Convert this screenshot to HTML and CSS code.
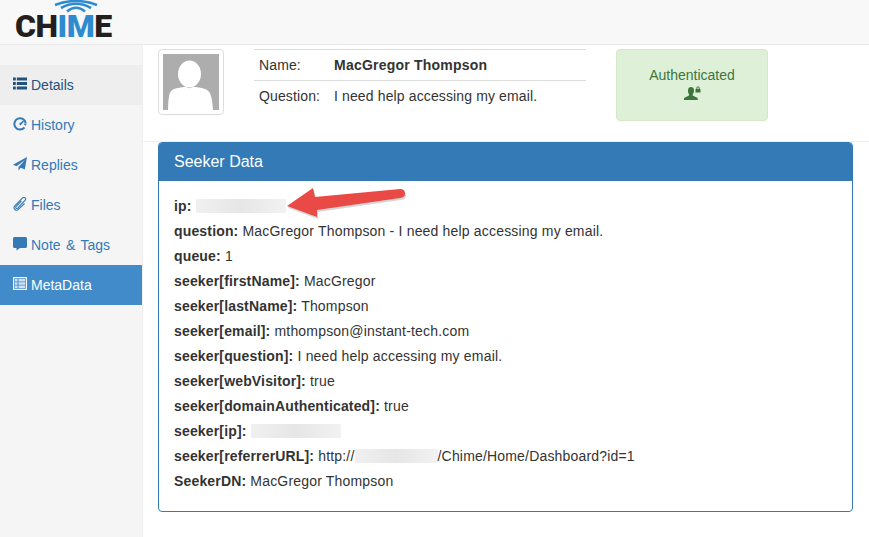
FILE: index.html
```html
<!DOCTYPE html>
<html lang="en">
<head>
<meta charset="utf-8">
<title>Chime</title>
<link rel="stylesheet" href="styles.css">
</head>
<body>
<header class="topbar">
  <div class="logo">
    <svg class="logo-arcs" width="44" height="13" viewBox="0 0 44 13" fill="none" stroke="#2e8bd0" stroke-linecap="butt">
      <path d="M1 5Q22 -3 43 5" stroke-width="2.600"/>
      <path d="M7 8Q22 -.5 37 8" stroke-width="2.600"/>
      <path d="M13 11.500Q22 4 31 11.500" stroke-width="2.600"/>
    </svg>
    <span class="logo-text">CH<span class="logo-blue">IM</span>E</span>
  </div>
</header>
<div class="layout">
  <nav class="sidebar">
    <a class="nav-item is-hover">
      <svg class="nav-icon" viewBox="0 0 14 14"><path fill="currentColor" d="M0 .5h2.800v3H0zM3.800 .5H14v3H3.800zM0 5h2.800v3H0zM3.800 5H14v3H3.800zM0 9.500h2.800v3H0zM3.800 9.500H14v3H3.800z"/></svg>Details</a>
    <a class="nav-item">
      <svg class="nav-icon" viewBox="0 0 14 14"><path fill="none" stroke="currentColor" stroke-width="2" d="M11.500 10.500A5.700 5.700 0 1 1 12.700 6"/><path fill="currentColor" d="M6 7l4-3.500 1 1L7.500 8.500zM10.500 6.500h3.500l-1.700 2.500z"/></svg>History</a>
    <a class="nav-item">
      <svg class="nav-icon" viewBox="0 0 14 14"><path fill="currentColor" d="M14 0L11.800 12.500 7.800 10.800 5.500 13.500V10L12 3 3.500 9.300 0 7.800z"/></svg>Replies</a>
    <a class="nav-item">
      <svg class="nav-icon" viewBox="0 0 14 14"><path fill="none" stroke="currentColor" stroke-width="1.100" d="M8.500 4L3 9.700c-1 1.200 .6 2.400 1.700 1.400L12 3.500C14 1 11 -.5 9.300 1.200L1.800 8.800c-2.300 2.800 1.200 6 3.800 3.400L11.500 6.500"/></svg>Files</a>
    <a class="nav-item">
      <svg class="nav-icon" viewBox="0 0 14 14"><path fill="currentColor" d="M1.500 0h11A1.500 1.500 0 0 1 14 1.500v8a1.500 1.500 0 0 1-1.500 1.500H7L3.500 13.500V11h-2A1.500 1.500 0 0 1 0 9.500v-8A1.500 1.500 0 0 1 1.500 0z"/></svg>Note &amp; Tags</a>
    <a class="nav-item is-active">
      <svg class="nav-icon" viewBox="0 0 14 14"><path fill="currentColor" fill-rule="evenodd" d="M0 0h14v13H0zM1.200 1.200v10.600h11.600V1.200z"/><path fill="currentColor" opacity=".75" d="M2 2h2.500v2.500H2zM5.500 2H12v2.500H5.500zM2 5.300h2.500v2.500H2zM5.500 5.300H12v2.500H5.500zM2 8.600h2.500V11H2zM5.500 8.600H12V11H5.500z"/></svg>MetaData</a>
  </nav>
  <main class="content">
    <section class="summary">
      <div class="avatar">
        <svg width="56" height="56" viewBox="0 0 56 56"><rect width="56" height="56" fill="#adadad"/><ellipse cx="26.500" cy="20" rx="11.500" ry="13.500" fill="#fff"/><path d="M5 56C5.500 42 6 37 11 35c5-1.500 9-2 12-2 2 1.500 5 1.500 7 0 4 0 7 .5 12 2 6 2 7 8 8 21z" fill="#fff"/></svg>
      </div>
      <div class="identity">
        <div class="identity-row"><span class="identity-label">Name:</span><strong>MacGregor Thompson</strong></div>
        <div class="identity-row"><span class="identity-label">Question:</span><span>I need help accessing my email.</span></div>
      </div>
      <div class="auth-badge">
        <span>Authenticated</span>
        <svg class="auth-icon" width="17" height="14" viewBox="0 0 17 14"><path fill="#3c763d" d="M7 1c2 0 3 1.500 3 3.500 0 1.500-.5 3-1.300 3.800V9.500l5 2.500v2H0v-2l5-2.500V8.300C4.300 7.500 4 6 4 4.500 4 2.500 5 1 7 1z"/><path fill="#3c763d" d="M11.500 3H16.500V6.500H11.500z"/><path fill="none" stroke="#3c763d" d="M12.800 3V2a1.200 1.200 0 0 1 2.400 0v1"/></svg>
      </div>
    </section>
    <section class="panel">
      <h2 class="panel-heading">Seeker Data</h2>
      <div class="panel-body">
        <p class="row"><b>ip:</b> <span class="redact redact-ip"></span></p>
        <p class="row"><b>question:</b> MacGregor Thompson - I need help accessing my email.</p>
        <p class="row"><b>queue:</b> 1</p>
        <p class="row"><b>seeker[firstName]:</b> MacGregor</p>
        <p class="row"><b>seeker[lastName]:</b> Thompson</p>
        <p class="row"><b>seeker[email]:</b> mthompson@instant-tech.com</p>
        <p class="row"><b>seeker[question]:</b> I need help accessing my email.</p>
        <p class="row"><b>seeker[webVisitor]:</b> true</p>
        <p class="row"><b>seeker[domainAuthenticated]:</b> true</p>
        <p class="row"><b>seeker[ip]:</b> <span class="redact redact-ip2"></span></p>
        <p class="row"><b>seeker[referrerURL]:</b> http://<span class="redact redact-url"></span>/Chime/Home/Dashboard?id=1</p>
        <p class="row"><b>SeekerDN:</b> MacGregor Thompson</p>
      </div>
    </section>
  </main>
</div>
<svg class="arrow" width="124" height="36" viewBox="0 0 124 36">
  <path fill="#000" opacity=".16" d="M3 21L29 3 31 12 116 4q5 0 5 4.500 0 4-5 4.500L33 25 33 32z" transform="translate(1 2)"/>
  <path fill="#ea4a45" d="M3 21L29 3 31 12 116 4q5 0 5 4.500 0 4-5 4.500L33 25 33 32z"/>
</svg>
</body>
</html>
```
FILE: styles.css
```css
* { box-sizing: border-box; }
html, body { margin: 0; height: 100%; }
body {
  position: relative;
  width: 869px;
  height: 537px;
  overflow: hidden;
  background: #fff;
  color: #333;
  font: 14px/20px "Liberation Sans", Arial, sans-serif;
}
.topbar {
  height: 45px;
  background: #f8f8f8;
  border-bottom: 1px solid #e7e7e7;
  padding-left: 15px;
}
.logo { position: relative; width: 100px; height: 44px; }
.logo-arcs { position: absolute; left: 39px; top: 0; }
.logo-text {
  position: absolute;
  left: 0;
  top: 11px;
  font: 900 32px/31px Roboto, "Liberation Sans", sans-serif;
  color: #231f20;
  letter-spacing: -.5px;
  white-space: nowrap;
}
.logo-blue { color: #2e8bd0; }
.layout { display: flex; height: 492px; }
.sidebar {
  width: 143px;
  flex: none;
  padding-top: 20px;
  background: #f5f5f5;
  border-right: 1px solid #eee;
}
.nav-item {
  display: flex;
  align-items: center;
  height: 40px;
  padding-left: 13px;
  color: #337ab7;
  word-spacing: 1.5px;
}
.nav-icon { width: 14px; height: 14px; margin-right: 4px; margin-top: -3px; flex: none; }
.nav-item.is-hover { background: #eee; color: #23527c; }
.nav-item.is-active { background: #428bca; color: #fff; }
.content { flex: 1; min-width: 0; }
.summary {
  position: relative;
  display: flex;
  align-items: flex-start;
  height: 97px;
  padding: 4px 0 0 15px;
  border-bottom: 1px solid #f0f0f0;
}
.avatar {
  width: 66px;
  height: 66px;
  padding: 4px;
  background: #fff;
  border: 1px solid #ddd;
  border-radius: 4px;
  flex: none;
}
.avatar svg { display: block; }
.identity {
  width: 332px;
  margin-left: 30px;
  border-top: 1px solid #ddd;
  letter-spacing: .13px;
}
.identity strong { letter-spacing: .22px; }
.identity-row {
  display: flex;
  height: 31px;
  padding: 5px 5px 0;
  border-bottom: 1px solid #ddd;
}
.identity-row:last-child { border-bottom: 0; }
.identity-label { width: 75px; flex: none; }
.auth-badge {
  display: flex;
  flex-direction: column;
  align-items: center;
  width: 152px;
  height: 72px;
  margin-left: 30px;
  padding-top: 15px;
  color: #3c763d;
  background: #dff0d8;
  border: 1px solid #d6e9c6;
  border-radius: 4px;
}
.auth-icon { margin-top: 1px; }
.panel {
  width: 695px;
  height: 370px;
  margin-left: 15px;
  border: 1px solid #337ab7;
  border-radius: 4px;
  background: #fff;
}
.panel-heading {
  margin: 0;
  height: 38px;
  padding: 9px 15px;
  font-size: 16px;
  font-weight: 400;
  line-height: 20px;
  color: #fff;
  background: #337ab7;
  border-radius: 3px 3px 0 0;
}
.panel-body { padding: 13px 15px; }
.row { margin: 0; height: 25px; line-height: 25px; white-space: nowrap; letter-spacing: .18px; }
.row b { color: #333; letter-spacing: .16px; }
.redact {
  display: inline-block;
  height: 14px;
  vertical-align: -2px;
  background: linear-gradient(90deg, #f0f0f0, #e6e6e6 50%, #f2f2f2);
}
.redact-ip { width: 90px; }
.redact-ip2 { width: 90px; }
.redact-url { width: 83px; }
.arrow { position: absolute; left: 284px; top: 185px; }
```
